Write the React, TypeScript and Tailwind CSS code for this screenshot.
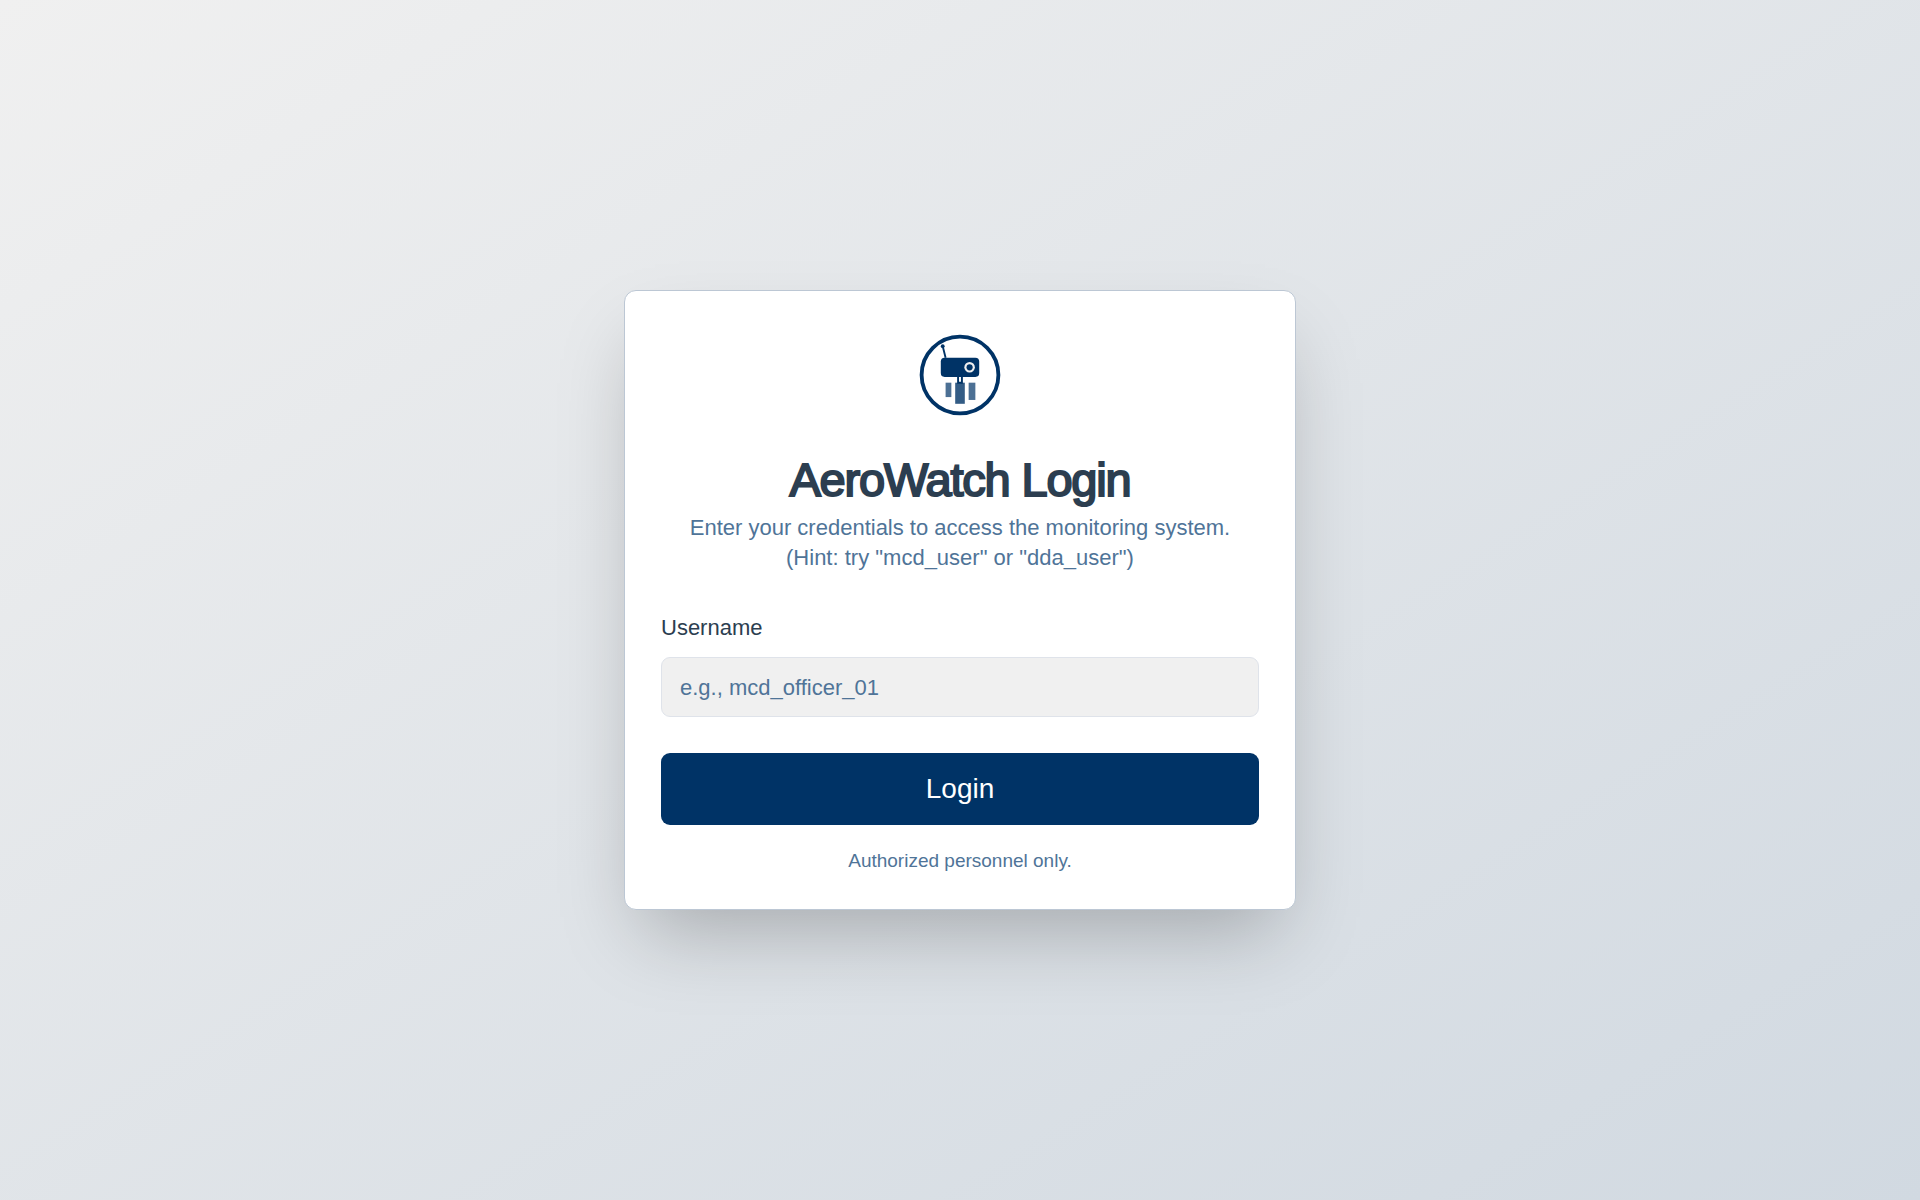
import React from "react";

function Logo() {
  return (
    <svg viewBox="0 0 100 100" className="size-24" role="img" aria-label="AeroWatch logo">
      <circle cx="50" cy="50" r="40" fill="none" stroke="#003366" strokeWidth="4" />
      <rect x="35" y="58" width="6" height="15" fill="#003366" opacity="0.7" />
      <rect x="45" y="58" width="10" height="22" fill="#003366" opacity="0.8" />
      <rect x="59" y="58" width="7" height="18" fill="#003366" opacity="0.7" />
      <rect x="30" y="32" width="40" height="20" rx="4" fill="#003366" />
      <circle cx="60" cy="42" r="5.5" fill="#f0f0f0" />
      <circle cx="60" cy="42" r="3.2" fill="#003366" />
      <path d="M35 32 L32 20" stroke="#003366" strokeWidth="2" />
      <circle cx="32" cy="20" r="2" fill="#003366" />
      <path d="M48 52 V58 H52 V52" fill="none" stroke="#003366" strokeWidth="2" />
    </svg>
  );
}

export default function App() {
  return (
    <main className="flex min-h-screen items-center justify-center bg-[linear-gradient(to_bottom_right,#f0f0f0,#d1d9e1)] p-6 font-['Liberation_Sans',Arial,sans-serif]">
      <section className="w-full max-w-2xl rounded-xl border border-[#bcc7d4] bg-white p-9 shadow-[0_38px_75px_-18px_rgba(0,0,0,0.25)]">
        <header className="flex flex-col items-center text-center">
          <Logo />
          <h1 className="mt-8 text-[47px] leading-[50px] tracking-tight text-[#2c3e50] [-webkit-text-stroke:2px_#2c3e50]">
            AeroWatch Login
          </h1>
          <p className="mt-2 text-[22px] leading-[30px] text-[#4f7498]">
            Enter your credentials to access the monitoring system.
            <br />
            (Hint: try "mcd_user" or "dda_user")
          </p>
        </header>
        <form className="mt-10 flex flex-col" onSubmit={(e) => e.preventDefault()}>
          <label htmlFor="username" className="text-[22px] leading-[30px] text-[#2c3e50]">
            Username
          </label>
          <input
            id="username"
            type="text"
            placeholder="e.g., mcd_officer_01"
            className="mt-3.5 h-15 w-full rounded-[9px] border border-[#dfe3ea] bg-[#f0f0f0] px-[18px] pt-0.5 text-[22px] text-[#2c3e50] placeholder:text-[#4f7498]"
          />
          <button type="submit" className="mt-9 h-18 w-full rounded-[9px] bg-[#003366] text-[28px] text-white">
            Login
          </button>
        </form>
        <p className="mt-6 text-center text-[19px] leading-6 text-[#4f7498]">Authorized personnel only.</p>
      </section>
    </main>
  );
}
